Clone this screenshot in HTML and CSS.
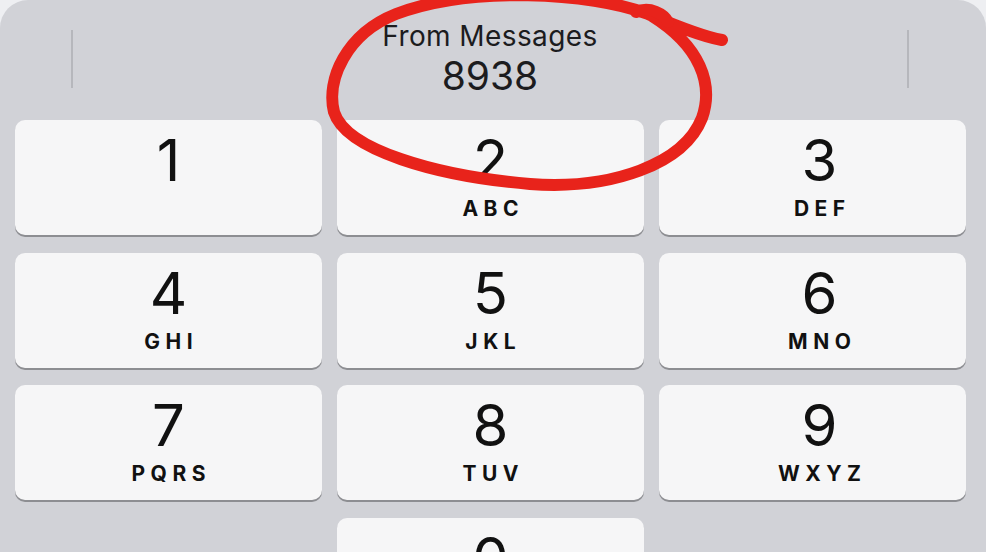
FILE: index.html
```html
<!DOCTYPE html>
<html lang="en">
<head>
    <meta charset="UTF-8">
    <meta name="viewport" content="width=device-width, initial-scale=1.0">
    <title>Keypad</title>
    <link rel="stylesheet" href="styles.css">
</head>
<body>
    <div class="pad">
        <div class="header">
            <span class="divider"></span>
            <div class="suggestion">
                <div class="source">From Messages</div>
                <div class="code">8938</div>
            </div>
            <span class="divider"></span>
        </div>
        <div class="keys">
            <div class="key"><span class="num">1</span><span class="letters"></span></div>
            <div class="key"><span class="num">2</span><span class="letters">ABC</span></div>
            <div class="key"><span class="num">3</span><span class="letters">DEF</span></div>
            <div class="key"><span class="num">4</span><span class="letters">GHI</span></div>
            <div class="key"><span class="num">5</span><span class="letters">JKL</span></div>
            <div class="key"><span class="num">6</span><span class="letters">MNO</span></div>
            <div class="key"><span class="num">7</span><span class="letters">PQRS</span></div>
            <div class="key"><span class="num">8</span><span class="letters">TUV</span></div>
            <div class="key"><span class="num">9</span><span class="letters">WXYZ</span></div>
            <div class="blank"></div>
            <div class="key"><span class="num">0</span><span class="letters"></span></div>
            <div class="blank"></div>
        </div>

        <!-- red hand-drawn circle over the code -->
        <svg class="scribble" width="986" height="220" viewBox="0 0 986 220">
            <path d="M722 40 C700 36 672 24 648 14 C590 -8 470 -14 396 14 C346 34 326 80 334 112 C346 150 436 176 530 184 C612 190 684 164 702 118 C714 84 700 46 652 16"
                  fill="none" stroke="#e8231b" stroke-width="12" stroke-linecap="round" stroke-linejoin="round"/>
            <path d="M636 12 C650 6 664 14 668 22" fill="none" stroke="#e8231b" stroke-width="12" stroke-linecap="round"/>
        </svg>
    </div>
</body>
</html>
```

FILE: styles.css
```css
html, body {
    margin: 0;
    height: 100%;
}
body {
    background-color: #eeeff2;
    font-family: Inter, "Liberation Sans", sans-serif;
    overflow: hidden;
}
.pad {
    position: relative;
    height: 100%;
    background-color: #d1d2d7;
    border-radius: 28px 28px 0 0;
}
.header {
    height: 120px;
    display: flex;
    justify-content: space-between;
    align-items: flex-start;
    padding: 30px 77px 0 71px;
    box-sizing: border-box;
}
.divider {
    width: 2px;
    height: 58px;
    background-color: #b6b7bc;
}
.suggestion {
    text-align: center;
    color: #1c1c1e;
    margin-top: -12px;
}
.source {
    font-size: 28px;
    line-height: 36px;
    letter-spacing: 0.4px;
}
.code {
    font-size: 39px;
    line-height: 44px;
}
.keys {
    display: grid;
    grid-template-columns: repeat(3, 1fr);
    grid-auto-rows: 115px;
    column-gap: 15px;
    row-gap: 17.5px;
    padding: 0 20px 0 15px;
}
.key {
    background-color: #f6f6f7;
    border-radius: 10px;
    box-shadow: 0 2px 0 #8d8e92;
    display: flex;
    flex-direction: column;
    align-items: center;
    color: #111;
}
.key:nth-child(3n) {
    padding-left: 14px;
}
.num {
    font-size: 58px;
    line-height: 58px;
    margin-top: 11px;
}
.letters {
    font-size: 21px;
    font-weight: 700;
    letter-spacing: 5.5px;
    margin-right: -5.5px;
    line-height: 24px;
    margin-top: 8px;
}
.scribble {
    position: absolute;
    top: 0;
    left: 0;
    pointer-events: none;
}
```
